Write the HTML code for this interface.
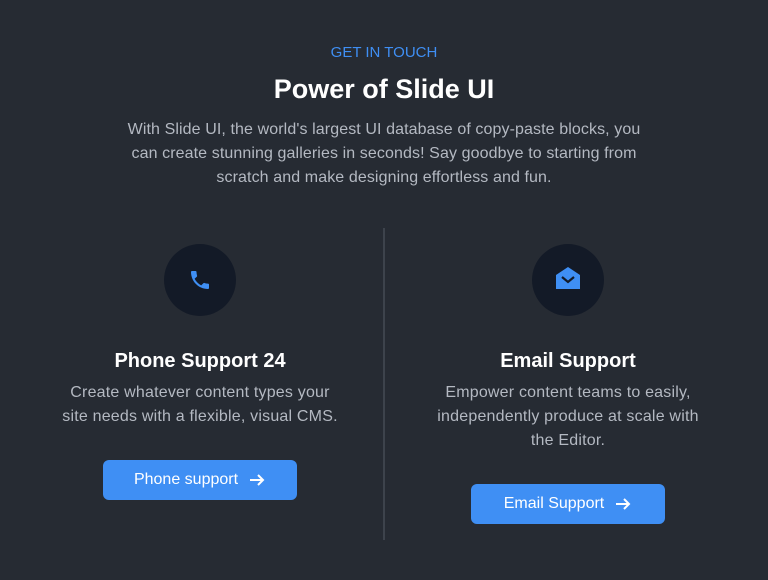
<!DOCTYPE html>
<html><head><style>
body{margin:0;width:768px;height:580px;background:#262b33;font-family:"Liberation Sans",sans-serif;position:relative;overflow:hidden}
.a{position:absolute;text-align:center}
.btn{position:absolute;background:#3f8ff4;color:#fff;border-radius:6px;font-size:16px;display:flex;align-items:center;justify-content:center;gap:10px;height:40px;width:194px}
.c{position:absolute;width:72px;height:72px;border-radius:50%;background:#131a27}
</style></head><body>
<div class="a" style="left:0;width:768px;top:44px;color:#3f8ff4;font-size:15px">GET IN TOUCH</div>
<div class="a" style="left:0;width:768px;top:74px;color:#fff;font-size:27px;font-weight:bold">Power of Slide UI</div>
<div class="a" style="left:114px;width:540px;top:118px;color:#b4b9c2;font-size:16px;line-height:24px;letter-spacing:0.1px">With Slide UI, the world's largest UI database of copy-paste blocks, you can create stunning galleries in seconds! Say goodbye to starting from scratch and make designing effortless and fun.</div>
<div style="position:absolute;left:383px;top:228px;width:2px;height:312px;background:#3d434c"></div>
<div class="c" style="left:164px;top:244px"><svg width="72" height="72" viewBox="0 0 72 72"><g transform="translate(24,24)"><path d="M6.6 10.8c1.4 2.8 3.8 5.1 6.6 6.6l2.2-2.2c.3-.3.7-.4 1-.2 1.1.4 2.3.6 3.6.6.6 0 1 .4 1 1V20c0 .6-.4 1-1 1-9.4 0-17-7.6-17-17 0-.6.4-1 1-1h3.5c.6 0 1 .4 1 1 0 1.3.2 2.5.6 3.6.1.3 0 .7-.2 1L6.6 10.8z" fill="#3f8ff4"/></g></svg></div>
<div class="c" style="left:532px;top:244px"><svg width="72" height="72" viewBox="0 0 72 72"><path d="M24 31l12-8 12 8v14H24z" fill="#3f8ff4"/><path d="M30 33l6 5 6-5" stroke="#131a27" stroke-width="2.2" fill="none"/></svg></div>
<div class="a" style="left:50px;width:300px;top:350px;color:#fff;font-size:20px;font-weight:bold">Phone Support 24</div>
<div class="a" style="left:60px;width:280px;top:381px;color:#b4b9c2;font-size:16px;line-height:24px;letter-spacing:0.2px">Create whatever content types your site needs with a flexible, visual CMS.</div>
<div class="a" style="left:418px;width:300px;top:350px;color:#fff;font-size:20px;font-weight:bold">Email Support</div>
<div class="a" style="left:428px;width:280px;top:381px;color:#b4b9c2;font-size:16px;line-height:24px;letter-spacing:0.2px">Empower content teams to easily, independently produce at scale with the Editor.</div>
<div class="btn" style="left:103px;top:460px">Phone support <svg width="18" height="18" viewBox="0 0 18 18"><path d="M2 9h13M10 4l5 5-5 5" stroke="#fff" stroke-width="2" fill="none"/></svg></div>
<div class="btn" style="left:471px;top:484px">Email Support <svg width="18" height="18" viewBox="0 0 18 18"><path d="M2 9h13M10 4l5 5-5 5" stroke="#fff" stroke-width="2" fill="none"/></svg></div>
</body></html>
